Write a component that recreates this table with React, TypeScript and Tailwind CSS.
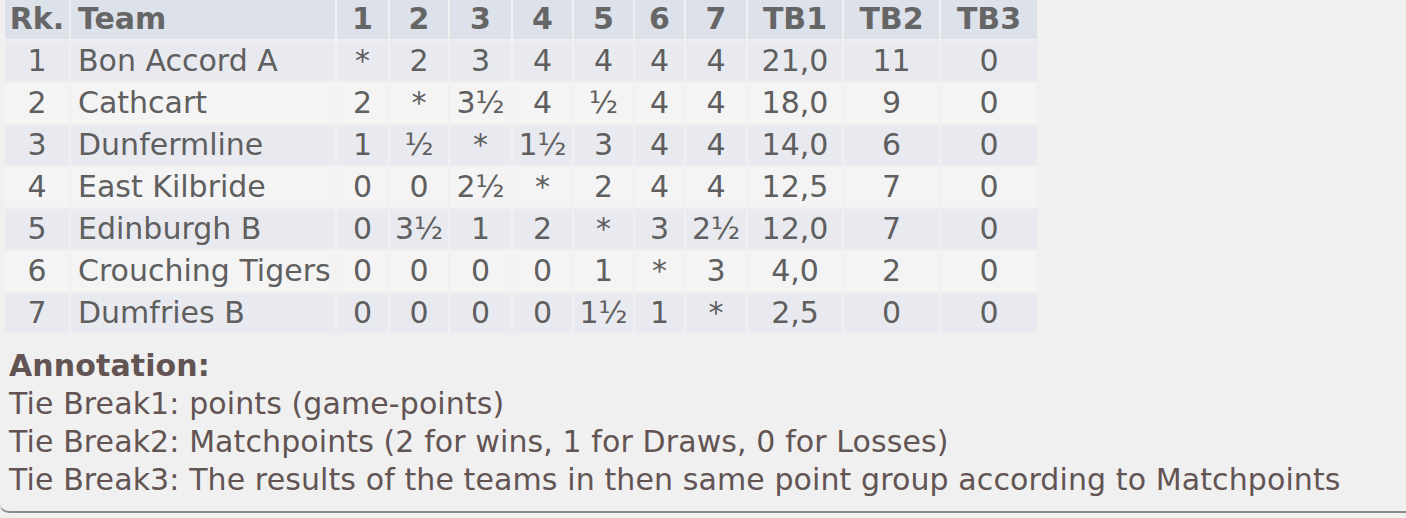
import React from "react";

const rows: [string, string, string[], string, string, string][] = [
  ["1", "Bon Accord A", ["*", "2", "3", "4", "4", "4", "4"], "21,0", "11", "0"],
  ["2", "Cathcart", ["2", "*", "3½", "4", "½", "4", "4"], "18,0", "9", "0"],
  ["3", "Dunfermline", ["1", "½", "*", "1½", "3", "4", "4"], "14,0", "6", "0"],
  ["4", "East Kilbride", ["0", "0", "2½", "*", "2", "4", "4"], "12,5", "7", "0"],
  ["5", "Edinburgh B", ["0", "3½", "1", "2", "*", "3", "2½"], "12,0", "7", "0"],
  ["6", "Crouching Tigers", ["0", "0", "0", "0", "1", "*", "3"], "4,0", "2", "0"],
  ["7", "Dumfries B", ["0", "0", "0", "0", "1½", "1", "*"], "2,5", "0", "0"],
];

const colW = ["w-[51px]", "w-[58px]", "w-[61px]", "w-[59px]", "w-[59px]", "w-[49px]", "w-[60px]"];

export default function App() {
  return (
    <div
      className="w-[1406px] h-[518px] overflow-hidden bg-[#f0f0f0]"
      style={{ fontFamily: '"DejaVu Sans", Verdana, sans-serif' }}
    >
      <div className="h-[516px] border-b-2 border-l border-b-[#8a8a8a] border-l-[#d8d8d8] rounded-bl-[10px] -ml-px">
        <table className="table-fixed border-separate border-spacing-[2px] ml-[3px] -mt-[3px] text-[30px] text-[#5f5f5f]">
          <colgroup>
            <col className="w-[64px]" />
            <col className="w-[264px]" />
            {colW.map((w, i) => (
              <col key={i} className={w} />
            ))}
            <col className="w-[94px]" />
            <col className="w-[95px]" />
            <col className="w-[96px]" />
          </colgroup>
          <thead>
            <tr className="h-[40px] bg-[#dde1ea] text-[#666666]">
              <th className="p-0 font-bold text-center leading-none">Rk.</th>
              <th className="p-0 pl-[7px] font-bold text-left leading-none">Team</th>
              {["1", "2", "3", "4", "5", "6", "7"].map((h) => (
                <th key={h} className="p-0 font-bold text-center leading-none">
                  {h}
                </th>
              ))}
              <th className="p-0 font-bold text-center leading-none">TB1</th>
              <th className="p-0 font-bold text-center leading-none">TB2</th>
              <th className="p-0 font-bold text-center leading-none">TB3</th>
            </tr>
          </thead>
          <tbody>
            {rows.map((r, i) => (
              <tr
                key={r[0]}
                className={`h-[40px] ${i % 2 === 0 ? "bg-[#e9eaf0]" : "bg-[#f4f4f4]"}`}
              >
                <td className="p-0 text-center leading-none">{r[0]}</td>
                <td className="p-0 pl-[7px] text-left leading-none whitespace-nowrap">{r[1]}</td>
                {r[2].map((v, j) => (
                  <td key={j} className="p-0 text-center leading-none whitespace-nowrap">
                    {v}
                  </td>
                ))}
                <td className="p-0 text-center leading-none">{r[3]}</td>
                <td className="p-0 text-center leading-none">{r[4]}</td>
                <td className="p-0 text-center leading-none">{r[5]}</td>
              </tr>
            ))}
          </tbody>
        </table>
        <div className="mt-[12px] pl-[9px] text-[30px] leading-[38px] tracking-[0.1px] text-[#635454]">
          <div className="font-bold">Annotation:</div>
          <div>Tie Break1: points (game-points)</div>
          <div>Tie Break2: Matchpoints (2 for wins, 1 for Draws, 0 for Losses)</div>
          <div>Tie Break3: The results of the teams in then same point group according to Matchpoints</div>
        </div>
      </div>
    </div>
  );
}
